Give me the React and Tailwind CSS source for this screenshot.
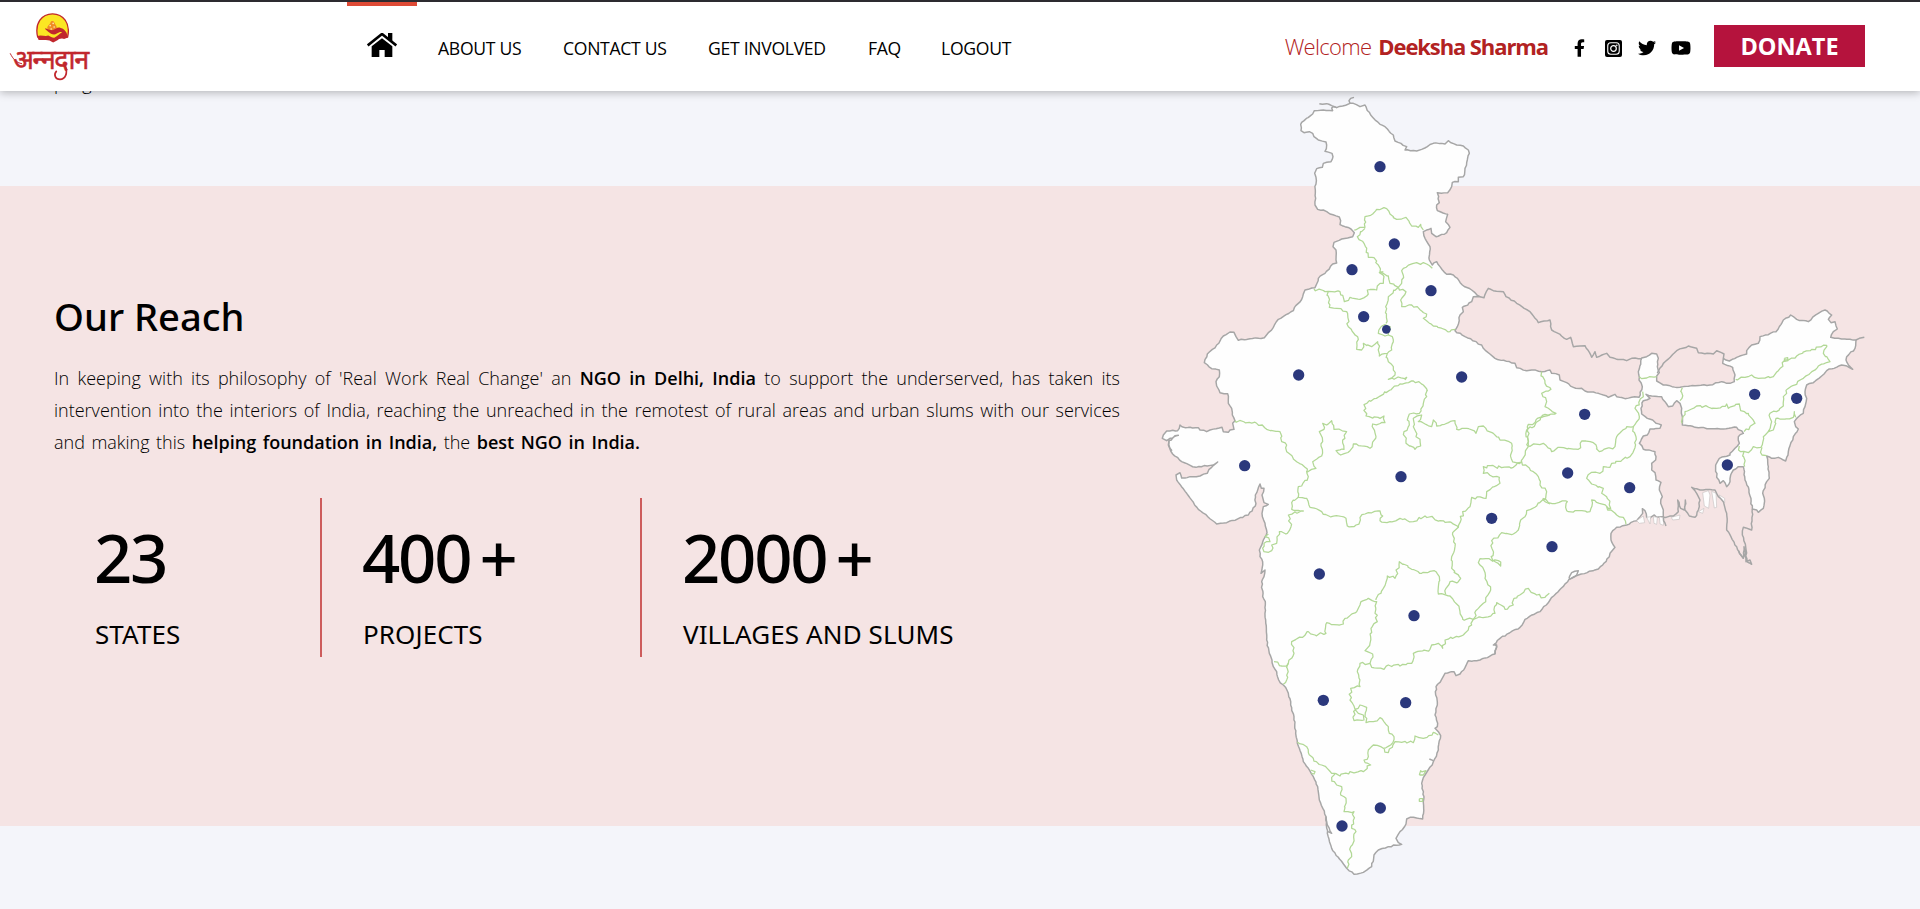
import React from "react";
import { FaFacebookF, FaTwitter, FaYoutube } from "react-icons/fa";

// Map geometry. Each run is [offsetX, offsetY, "x,y x,y ..."] on a 2190 x 2457 grid.
const A = [0, 0];
const B = [0, 870];
const C = [0, 1590];
const D = [900, 570];

const OUTLINE = [
  [A, "600,40 578,48 560,53 550,50 545,54 548,62 520,60 493,62 488,72 455,97 452,103 453,122 462,128 478,125 488,130 492,140 505,150 528,156 530,165 525,184 546,190 549,200 543,215 520,220 517,232 500,236 494,250 498,262 496,300 495,345 503,358 520,360 540,372 568,381 572,392 570,404 585,410 603,417 613,428 608,440 575,447 552,457 549,470 558,480 558,510 560,519 548,522 525,550 505,565 500,582 495,593 465,600 458,620 430,662 385,688 370,712 352,732 343,743 300,746 265,751 258,740 252,727 240,726 220,738 200,765 172,792 163,818 185,836 208,840 208,860 198,875"],
  [B, "200,18 210,38 233,41 235,70 245,85 247,105 255,122 248,130 252,148 240,150 235,157 220,155 216,142 180,150 170,155 150,150 145,143 105,143 90,135 83,152 50,153 40,165 37,175 50,182 60,175 85,166 57,182 55,195 68,222 95,245 138,262 190,255 203,246 185,262 172,280 150,288 120,290 95,294 90,278 78,285 80,300 110,340 145,388 200,432 230,428 295,405 316,378 316,345 330,312 334,325 342,325 336,345 342,368 355,373 340,380 336,400 345,430 351,458 340,480 328,510 330,530 338,545 333,580 345,570 342,590 335,605 338,650 346,665 347,720 350,780 358,820 366,840 370,860 380,875 386,900"],
  [C, "400,195 415,220 422,255 432,290 437,340 442,370 460,425 475,445 490,470 503,500 508,540 528,590 532,640 545,685 590,745 612,763 640,757 665,740 672,705 685,690 715,680 755,673 745,668 738,655 750,635 768,612 770,597 780,592 800,594 818,597 822,530 815,490 825,465 850,425 865,390 872,347 865,335 855,325 862,320 863,310 855,285 862,255 857,225 858,200 875,178 885,160 912,155 918,167 930,162 945,143 955,122 990,120 1035,102 1040,75 1030,75 1050,55 1110,22"],
  [B, "1125,718 1170,695 1200,660"],
  [D, "357,898 385,885 445,867 478,830 480,820 495,802 483,780 483,760 500,742 530,735 560,722 578,700 577,686 585,692 590,712 600,715 613,705 620,712 640,710 640,690 632,670 637,650 628,630 633,607 618,600 615,578 605,570 605,550 617,540 615,515 580,508 568,490 580,468 592,465 600,447 630,445 634,435 618,430 608,420 592,415 575,402 573,385 580,362 600,355 588,343 605,348 635,350 645,365 655,380 668,378 680,362 690,370 695,385 697,435 745,443 820,447 860,442 880,460 865,470 868,490 855,505 840,520 840,525 808,535 797,555 800,592 810,610 820,602 830,620 840,605 842,585 850,570 865,560 880,560 885,600 897,630 907,687 920,690 925,697 940,685 943,655 938,640 950,605 958,595 955,560 950,528 965,535 985,532 1007,543 1015,515 1030,470 1045,447 1037,440 1033,425 1040,415 1060,400 1065,380 1070,355 1065,335 1070,315 1090,308 1115,288 1130,272 1175,255 1188,257 1208,268 1202,262 1188,240 1190,230 1215,205 1218,180 1200,178 1165,175 1142,172 1150,155 1162,147 1155,125 1143,128 1135,118 1145,105 1125,90 1105,100 1075,125 1040,118 1022,105 1000,120 978,155 930,170 925,190 905,195 890,212 890,222 860,232 838,243 820,235 818,250 848,262 855,285 853,305 840,310 815,305 780,315 735,317 690,322 640,315 620,303 620,288 628,278 622,260 625,235 620,222 605,220 590,230 575,234 565,275 567,300 577,320 567,352 545,352 525,356 500,350 495,343 475,352 445,340 405,333 395,325 370,322 350,308 330,300 328,285 305,280 300,270 275,275 245,270 230,272 200,263 195,250 135,235 100,205 95,195 45,170 15,152 22,140 30,105 40,95 37,82 65,65 70,50 90,50 75,38 65,30 37,15"],
  [A, "910,555 890,553 870,530 860,515 847,525 838,510 840,470 825,445 820,425 843,415 845,430 858,440 890,428 900,412 887,395 893,373 862,362 860,345 868,338 862,308 893,308 905,290 907,277 925,275 925,262 940,260 945,235 958,190 955,180 940,168 920,165 895,152 885,162 850,160 815,178 800,183 765,180 770,170 735,153 730,135 705,110 690,103 662,75 645,45 630,50 610,40"],
];

const COASTS = [
  [A, "600,40 597,32 602,25 612,22"],
  [A, "508,41 530,41 545,47 560,53"],
  [D, "90,50 102,53 115,25 130,32 160,35 168,50 200,70 240,95 265,128 300,120 305,150 350,178 362,172 370,200 390,198 405,197 425,232 435,215 440,232 470,220 480,232 530,242 545,235 575,236"],
  [D, "622,280 640,250 680,212 715,198 740,205 745,218 790,222 800,212 822,222 820,235"],
  [D, "1218,180 1228,175 1243,172"],
  [D, "640,712 670,708 685,695 683,660 692,685 703,690 706,660 705,690 718,708 735,712 745,690 750,660 740,640 725,622 750,630 795,630 805,650 820,665 830,700 830,750 860,800 872,825 880,835"],
  [D, "866,812 880,835 882,800 888,845 900,840 905,853 890,845 887,800 877,765 880,742 905,750 907,687"],
  [D, "357,895 365,878 385,872 380,885 357,898"],
  [B, "1035,790 1040,800 1035,822"],
  [C, "528,590 532,615 545,640 534,635"],
  [C, "838,417 850,422"],
  [B, "57,182 60,205 66,212"],
  [D, "640,712 648,738"],
];

const BORDERS = [
  [A, "613,420 630,412 645,412 645,380 668,372 680,358 710,356 720,372 740,388 768,382 785,408 805,412 812,403 820,420"],
  [A, "645,415 622,440 642,460 655,502 672,503 685,525 690,545 715,558 720,580 745,592 755,580 760,535 800,518 830,522 847,535"],
  [A, "492,597 535,604 570,605 583,635 600,622 630,628 650,618 652,600 680,600 690,580 700,580 702,560 688,548 700,545"],
  [A, "535,604 538,652 560,655 590,665 595,710 625,748 620,778 635,780 640,760 665,770 683,755 688,798 712,790 725,780 727,740 715,735"],
  [A, "745,592 715,620 707,650 708,700"],
  [A, "695,708 685,730 705,738 715,735 720,710 705,704 695,708"],
  [A, "745,592 768,605 752,630 755,650 785,645 830,672 820,685 850,708 900,725 916,718"],
  [A, "712,790 715,815 730,830 735,855 715,868 770,862 765,870"],
  [A, "720,900 750,882 790,873 820,885 832,902"],
  [B, "832,30 830,50 820,70 808,100 778,102 772,120 778,135 762,155 768,190 795,208 812,198 810,178 798,170 790,115 815,105 805,125 845,140 850,120 860,138 915,122 920,148 950,145 978,160 985,140 1000,138 1030,160 1050,180 1085,190 1082,230 1098,248 1115,246 1135,200 1130,150 1180,110 1200,103"],
  [B, "720,30 642,74 648,108 690,115 702,108 705,128 668,132 678,170 660,205 610,192 600,212 572,225 558,212 582,208 578,180 590,155 552,148 545,122 530,135 518,130 522,148 508,155 518,185 515,228 488,245 498,265 468,275"],
  [B, "255,122 320,130 350,148 390,155 395,185 410,195 410,215 440,245 465,262 475,290 455,318 445,320 445,352 470,355 480,382 515,395 520,403 588,415 592,438 618,435 645,402 690,393 698,408 690,422 720,425 750,415 790,425 825,408 870,422 905,428 925,442 938,395 960,380 965,352 1008,355 1010,335 1050,310 1048,292 1000,280 1000,260 1090,262 1115,246"],
  [B, "445,352 425,368 425,388 460,393 415,405 423,440 412,460 388,455 380,490 365,495 365,512 342,515 342,490 360,485 345,470 355,462"],
  [B, "1115,246 1150,275 1165,290 1170,315 1190,335 1180,360 1200,372"],
  [B, "1180,358 1160,378 1130,392 1125,410 1112,420 1105,450 1090,462 1055,458 1025,482 1028,540 1052,558 1045,542 990,536 985,548 998,562 1005,595 1022,630 1000,670 985,685 970,718"],
  [B, "925,442 908,458 915,500 905,530 905,565 932,595 925,605 900,605 888,625 887,643"],
  [B, "678,660 700,625 712,588 735,595 748,545 785,568 815,580 858,575 868,590 865,642 900,648 920,672 938,718 970,718 1035,700 1040,668 1065,688 1090,675 1092,655 1135,625 1160,645 1185,652 1198,640"],
  [B, "970,718 965,735 940,765 885,780 878,805 865,790 845,795 840,808 790,820 785,850 750,858 715,855 702,868 665,862 660,850 668,822 645,812 660,790 663,745 682,725 675,700 680,665 655,655 630,675 620,695 585,715 580,732 530,728 528,760 495,765 475,755 425,785 432,820 415,850 395,858 372,845"],
  [C, "415,130 410,180 400,193"],
  [C, "660,130 630,130 622,155 630,200 602,205 600,240 612,258 612,302 642,300 640,285 625,280 615,268 630,255 650,262 645,290 648,308 670,305 690,293 715,320 718,340 732,350 722,375 700,385 670,375 655,390 655,410 642,420 662,435 640,455 600,455 570,468 545,460 515,435 490,415 470,380 442,366"],
  [C, "703,387 715,398 735,365 790,368 795,348 820,355 850,337 865,345"],
  [C, "555,462 545,472 560,495 575,500 572,525 588,535 582,575 612,575 605,625 618,635 602,680 605,710 595,720 592,745"],
  [C, "482,450 495,455 492,462 484,460"],
  [C, "808,465 812,452 828,452 820,465 808,465"],
  [C, "808,536 818,536 818,544 808,544 808,536"],
  [D, "275,275 285,310 303,328 275,340 290,365 285,380 318,400 285,403 232,440 235,497"],
  [D, "235,497 280,490 305,515 330,502 385,508 395,483 430,488 448,515 495,500 500,470 530,440 550,440 568,410 555,385 580,350 578,335"],
  [D, "550,440 558,470 552,510 540,530 485,550 480,562 460,560 450,580 425,577 410,595 425,612 460,625 455,640 470,650 482,685 425,660 420,695 350,692 352,665 295,668 278,655"],
  [D, "470,680 500,705 520,712 528,733"],
  [D, "568,290 590,294 620,290"],
  [D, "697,323 696,355 690,362"],
  [D, "697,430 705,395 740,378 800,385 830,372 835,385 868,372 872,392 895,400 915,430 882,455"],
  [D, "857,298 885,292 905,285 925,295 970,290 985,272 1005,240 1040,228 1085,208 1130,196 1120,220 1140,245 1105,258 1060,295 1022,320 1000,350 1000,378 960,400 965,425 955,455 970,450 978,415 1030,412 1033,395 1037,412"],
  [D, "1003,235 1013,233 1014,242 1004,244 1003,235"],
  [D, "868,498 872,515 895,518 910,500 933,502 940,470 955,455"],
  [D, "936,502 936,525 950,527"],
  [D, "882,515 884,560"],
];

const DELTA = [
  "758,638 775,632 780,645 776,685 763,678",
  "785,634 798,640 800,682 793,684",
  "808,645 824,655 824,668 812,658",
  "560,722 580,708 584,728 568,730",
  "590,712 602,710 600,732",
  "610,710 622,712 620,733 612,730",
  "628,710 642,714 640,736 630,732",
  "745,695 762,685 758,700",
  "664,712 690,705 688,718 668,720",
];

const DOTS = [
  [690, 230, 17], [733, 462, 17], [606, 539, 17], [843, 602, 17], [641, 680, 17], [709, 718, 13],
  [446, 855, 17], [935, 861, 17], [284, 1127, 17], [753, 1160, 17], [1025, 1285, 17], [508, 1452, 17],
  [792, 1577, 17], [520, 1831, 17], [767, 1838, 17], [691, 2154, 17], [576, 2208, 17],
  [1304, 973, 17], [1253, 1149, 17], [1439, 1193, 17], [1206, 1370, 17],
  [1814, 913, 17], [1940, 925, 17], [1732, 1125, 17],
];

const toPoints = ([[ox, oy], run]) =>
  run.split(" ").map((p) => {
    const [x, y] = p.split(",").map(Number);
    return [x + ox, y + oy];
  });

// Breaks long straight runs into short uneven ones, as a surveyed border has.
const roughen = (pts, amount) => {
  let seed = 7;
  const rnd = () => {
    seed = (seed * 16807) % 2147483647;
    return seed / 2147483647 - 0.5;
  };
  const out = [pts[0]];
  for (let i = 1; i < pts.length; i++) {
    const [x0, y0] = pts[i - 1];
    const [x1, y1] = pts[i];
    const n = Math.floor(Math.hypot(x1 - x0, y1 - y0) / 8);
    for (let k = 1; k < n; k++) {
      out.push([x0 + ((x1 - x0) * k) / n + rnd() * amount, y0 + ((y1 - y0) * k) / n + rnd() * amount]);
    }
    out.push([x1, y1]);
  }
  return out.map(([x, y]) => `${x.toFixed(1)},${y.toFixed(1)}`).join(" ");
};

function IndiaMap() {
  return (
    <svg viewBox="0 0 2190 2457" className="block h-[819px] w-[730px]" fill="none" strokeLinejoin="round">
      <polygon points={roughen(OUTLINE.flatMap(toPoints), 4)} fill="#fefefe" stroke="#a6a6a6" strokeWidth="4.4" />
      <g transform="translate(900 570)" fill="#fefefe" stroke="#c9c4c4" strokeWidth="2">
        {DELTA.map((d) => <polygon key={d} points={d} />)}
      </g>
      <g stroke="#a6a6a6" strokeWidth="4.4">
        {COASTS.map((r) => <polyline key={r[1]} points={roughen(toPoints(r), 4)} />)}
      </g>
      <g stroke="#b2d896" strokeWidth="3.8">
        {BORDERS.map((r) => <polyline key={r[1]} points={roughen(toPoints(r), 9)} />)}
      </g>
      <g fill="#2b387c">
        {DOTS.map(([x, y, r]) => <circle key={`${x}-${y}`} cx={x} cy={y} r={r} />)}
      </g>
    </svg>
  );
}

function Logo() {
  return (
    <a className="relative flex w-[96px] flex-col items-center pt-[11px] text-[#c1272d]">
      <svg viewBox="0 0 100 90" className="ml-[9px] h-[30px] w-[33px]">
        <path d="M5 72C-5 30 18 2 50 2s55 28 46 70L50 78z" fill="#fbe623" stroke="#c1272d" strokeWidth="4" />
        <path d="M35 48c-4-8 6-12 9-20 2-6 10-6 12 1 3 7 10 12 6 20-4 9-22 9-27-1z" fill="#f08a24" />
        <g fill="#fde9b0"><circle cx="43" cy="38" r="2.5" /><circle cx="52" cy="31" r="2.5" /><circle cx="55" cy="42" r="2.5" /><circle cx="46" cy="48" r="2.5" /></g>
        <path d="M3 70c12-6 24 2 34-2 8 4 14 8 20 6 8-4 14-12 22-16-4-2-10 0-16 4-10 6-18 0-26-6-6-4-10-8-10-10 8 2 14 6 22 6 10-2 14-10 24-8 12 2 22 14 24 30l-12 4c-8-4-14-2-20 4L52 89c-8-6-14-8-22-8H8z" fill="#c1272d" />
      </svg>
      <span className="-mt-[2px] ml-[5px] text-[27px] leading-[36px] tracking-[-1.4px] whitespace-nowrap [-webkit-text-stroke:0.5px_#c1272d]">अन्‍नदान</span>
      <svg viewBox="0 0 288 267" className="absolute top-0 left-0 h-[89px] w-[96px]" fill="none" stroke="#c1272d" strokeLinecap="round">
        <path d="M31 155c8 16 18 27 34 30" strokeWidth="3" />
        <path d="M196 192c8 22 0 40-16 40-14 0-20-14-11-24" strokeWidth="5" />
      </svg>
    </a>
  );
}

function HomeIcon() {
  return (
    <svg viewBox="0 0 90 72" className="h-[24px] w-[30px]">
      <path d="M63 0h13v26L63 15z" />
      <path d="M2 37L45 3l43 34" fill="none" stroke="#000" strokeWidth="8" />
      <path d="M14 40L45 16l31 24v32H53V51H37v21H14z" />
    </svg>
  );
}

function InstagramIcon() {
  return (
    <svg viewBox="0 0 34 34" className="h-[17px] w-[17px]" fill="none">
      <rect width="34" height="34" rx="4" fill="#000" />
      <rect x="5.5" y="5.5" width="23" height="23" rx="6" stroke="#fff" strokeWidth="2.2" />
      <circle cx="17" cy="17" r="5.6" stroke="#fff" strokeWidth="2.4" />
      <circle cx="23.6" cy="10.4" r="1.6" fill="#fff" />
    </svg>
  );
}

function Stat({ value, plus, label, className }) {
  return (
    <div className={`h-[159px] pt-[23px] font-['Noto_Sans',sans-serif] ${className}`}>
      <div className="-ml-px text-[67px] leading-[72px] font-medium tracking-[-2.2px]">
        {value}{plus && <span className="ml-[9px]">+</span>}
      </div>
      <div className="mt-[23px] text-[26px] leading-[36px] font-[450] tracking-[0.1px] whitespace-nowrap">{label}</div>
    </div>
  );
}

export default function App() {
  return (
    <div className="flex h-[909px] w-[1920px] flex-col overflow-hidden bg-[#f4f5fa] font-['Open_Sans','Noto_Sans',sans-serif] text-black">
      <header className="relative z-10 flex h-[91px] shrink-0 border-t-2 border-[#2d2b30] bg-white shadow-[0_2px_8px_rgba(0,0,0,0.25)]">
        <Logo />
        <nav className="ml-[251px] flex text-[17.6px] leading-[24px] tracking-[-0.3px]">
          <a className="flex w-[70px] justify-center border-t-4 border-[#de4a35] pt-[27px]"><HomeIcon /></a>
          <a className="ml-[21px] w-[125px] pt-[34px]">ABOUT US</a>
          <a className="w-[145px] pt-[34px]">CONTACT US</a>
          <a className="w-[160px] pt-[34px]">GET INVOLVED</a>
          <a className="w-[73px] pt-[34px]">FAQ</a>
          <a className="pt-[34px]">LOGOUT</a>
        </nav>
        <div className="ml-auto flex items-start pr-[55px]">
          <div className="mr-[14px] flex gap-[7px] pt-[28px] text-[22px] leading-[32px] text-[#b22222]">
            <span className="font-light tracking-[-0.7px]">Welcome</span>
            <b className="tracking-[-1.1px]">Deeksha Sharma</b>
          </div>
          <div className="mt-[37px] mr-[16px] grid h-[18px] grid-cols-[34px_34px_34px_34px] place-items-center">
            <FaFacebookF className="h-[18px] w-[11px]" />
            <InstagramIcon />
            <FaTwitter className="h-[18px] w-[18px]" />
            <FaYoutube className="h-[18px] w-[20px]" />
          </div>
          <a className="mt-[23px] flex h-[42px] w-[151px] items-center justify-center bg-[#b5133d] pt-px text-[23.5px] font-bold text-white">DONATE</a>
        </div>
      </header>

      <section className="-mt-[23px] h-[118px] shrink-0 pl-[54px] text-[18px] leading-[30px] font-light">program</section>

      <section className="flex h-[640px] shrink-0 items-start bg-[#f5e4e4] pl-[54px]">
        <div className="w-[1066px] pt-[103px]">
          <h2 className="font-['Noto_Sans',sans-serif] text-[38.2px] leading-[54px] font-medium">Our Reach</h2>
          <p className="mt-[19px] text-[18px] leading-[32px] font-light [text-align-last:justify]">
            <span className="block">In keeping with its philosophy of 'Real Work Real Change' an <b className="font-semibold">NGO in Delhi, India</b> to support the underserved, has taken its</span>
            <span className="block">intervention into the interiors of India, reaching the unreached in the remotest of rural areas and urban slums with our services</span>
            <span className="block w-[586px]">and making this <b className="font-semibold">helping foundation in India,</b> the <b className="font-semibold">best NGO in India.</b></span>
          </p>
          <div className="mt-[40px] flex">
            <Stat value="23" label="STATES" className="w-[268px] border-r-2 border-[#cd5c5c] pl-[41px]" />
            <Stat value="400" plus label="PROJECTS" className="w-[320px] border-r-2 border-[#cd5c5c] pl-[41px]" />
            <Stat value="2000" plus label="VILLAGES AND SLUMS" className="pl-[41px]" />
          </div>
        </div>
        <div className="-mt-[96px] ml-[30px]"><IndiaMap /></div>
      </section>
    </div>
  );
}
